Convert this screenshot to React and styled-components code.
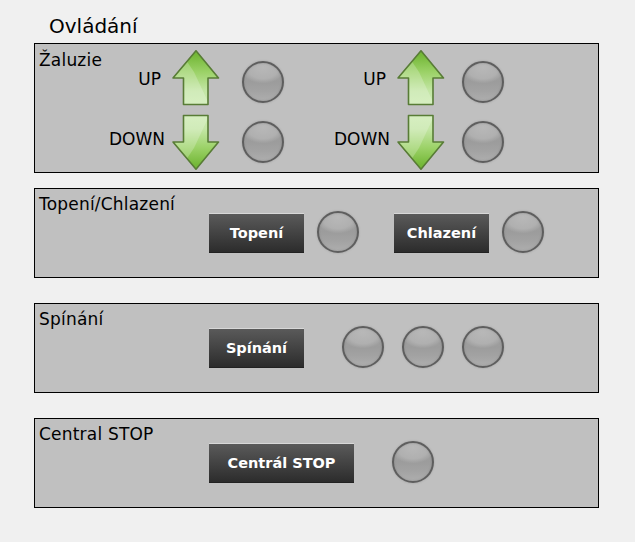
import React from 'react';
import styled, { createGlobalStyle } from 'styled-components';

const GlobalStyle = createGlobalStyle`
  html, body {
    margin: 0;
    padding: 0;
    background: #f0f0f0;
    font-family: "DejaVu Sans", Verdana, sans-serif;
    color: #000;
  }
`

const Page = styled.div`
  width: 635px;
  height: 542px;
  padding: 14px 36px 0 34px;
  box-sizing: border-box;
  overflow: hidden;
`

const Heading = styled.h1`
  margin: 0 0 4px 15px;
  height: 25px;
  font-size: 20px;
  line-height: 25px;
  font-weight: normal;
`

const Panel = styled.section`
  display: flex;
  align-items: flex-start;
  box-sizing: border-box;
  width: 565px;
  height: ${props => props.$height}px;
  margin-bottom: ${props => props.$gap}px;
  padding: ${props => props.$top}px 0 0 4px;
  background: #c0c0c0;
  border: 1px solid #000;
`

const PanelTitle = styled.div`
  width: ${props => props.$width}px;
  flex: none;
  font-size: 17px;
  line-height: 20px;
  letter-spacing: 0.2px;
  white-space: nowrap;
`

const Controls = styled.div`
  display: flex;
  align-items: flex-end;
  margin-top: 17px;
`

const ShutterControls = styled.div`
  display: flex;
`

const ShutterGroup = styled.div`
  display: grid;
  grid-template-columns: 73px 48px 42px;
  grid-auto-rows: 56px;
  row-gap: 8px;
  align-items: center;
  width: 225px;
  flex: none;
`

const Label = styled.div`
  font-size: 17px;
  line-height: 20px;
  text-align: right;
  padding: ${props => (props.$raised ? '0 7px 6px 0' : '2px 11px 0 0')};
  white-space: nowrap;
`

const Led = styled.div`
  box-sizing: border-box;
  width: 42px;
  height: 42px;
  flex: none;
  margin-left: ${props => props.$left || 0}px;
  margin-top: ${props => props.$drop || 0}px;
  border-radius: 50%;
  border: 2px solid #5e5e5e;
  background:
    radial-gradient(ellipse 58% 42% at 50% 12%, #b8b8b8 0%, #b0b0b0 70%, rgba(165, 165, 165, 0) 100%),
    linear-gradient(#a4a4a4 0%, #9c9c9c 50%, #a2a2a2 72%, #aeaeae 100%);
  box-shadow: 0 0 2px rgba(110, 110, 110, 0.45), inset 0 0 2px rgba(80, 80, 80, 0.3);
`

const ActionButton = styled.button`
  box-sizing: border-box;
  width: ${props => props.$width}px;
  height: 40px;
  flex: none;
  margin: 0 ${props => props.$right}px 0 ${props => props.$left || 0}px;
  padding: 0;
  border: 0;
  border-top: 1px solid #d8d8d8;
  border-bottom: 1px solid #222;
  background: linear-gradient(#5a5a5a, #2c2c2c);
  color: #fff;
  font-family: "DejaVu Sans", Verdana, sans-serif;
  font-size: 14.5px;
  font-weight: bold;
`

const LedRow = styled.div`
  display: flex;
  gap: 18px;
`

const ArrowSvg = styled.svg`
  display: block;
  width: 48px;
  height: 56px;
`

const ARROW_PATH = 'M24 .8 L46.5 28 L36 28 L36 54.5 L11.5 54.5 L11.5 28 L1 28 Z';

const Arrow = ({ id, down }) => (
  <ArrowSvg viewBox="0 0 48 56">
    <defs>
      <linearGradient id={id} x1="0" y1="0" x2="0" y2="1">
        <stop offset="0.08" stopColor="#74b838" />
        <stop offset="0.4" stopColor="#9cd268" />
        <stop offset="0.75" stopColor="#c4e6a6" />
        <stop offset="1" stopColor="#cbeab0" />
      </linearGradient>
      <clipPath id={`${id}-clip`}>
        <path d={ARROW_PATH} />
      </clipPath>
    </defs>
    <g transform={down ? 'translate(0 56) scale(1 -1)' : undefined}>
      <path d={ARROW_PATH} fill={`url(#${id})`} />
      <g clipPath={`url(#${id}-clip)`}>
        <path d="M0 26 L14 10 L22 22 L38 56 L0 56 Z" fill="#ffffff" opacity="0.22" />
      </g>
      <path d={ARROW_PATH} fill="none" stroke="#587c36" strokeWidth="1.6" strokeLinejoin="round" />
    </g>
  </ArrowSvg>
);

const Shutter = ({ name, ledGap }) => (
  <ShutterGroup>
    <Label>UP</Label>
    <Arrow id={`${name}-up`} />
    <Led $left={ledGap} $drop={8} />
    <Label $raised>DOWN</Label>
    <Arrow id={`${name}-down`} down />
    <Led $left={ledGap} />
  </ShutterGroup>
);

const App = () => (
  <Page>
    <GlobalStyle />
    <Heading>Ovládání</Heading>
    <Panel $height={130} $gap={15} $top={6}>
      <PanelTitle $width={60}>Žaluzie</PanelTitle>
      <ShutterControls>
        <Shutter name="a" ledGap={22} />
        <Shutter name="b" ledGap={17} />
      </ShutterControls>
    </Panel>
    <Panel $height={90} $gap={25} $top={5}>
      <PanelTitle $width={170}>Topení/Chlazení</PanelTitle>
      <Controls>
        <ActionButton $width={95} $right={13}>Topení</ActionButton>
        <Led />
        <ActionButton $width={95} $right={13} $left={35}>Chlazení</ActionButton>
        <Led />
      </Controls>
    </Panel>
    <Panel $height={90} $gap={25} $top={5}>
      <PanelTitle $width={170}>Spínání</PanelTitle>
      <Controls>
        <ActionButton $width={95} $right={38}>Spínání</ActionButton>
        <LedRow>
          <Led />
          <Led />
          <Led />
        </LedRow>
      </Controls>
    </Panel>
    <Panel $height={90} $gap={0} $top={5}>
      <PanelTitle $width={170}>Central STOP</PanelTitle>
      <Controls>
        <ActionButton $width={145} $right={38}>Centrál STOP</ActionButton>
        <Led />
      </Controls>
    </Panel>
  </Page>
);

export default App;
